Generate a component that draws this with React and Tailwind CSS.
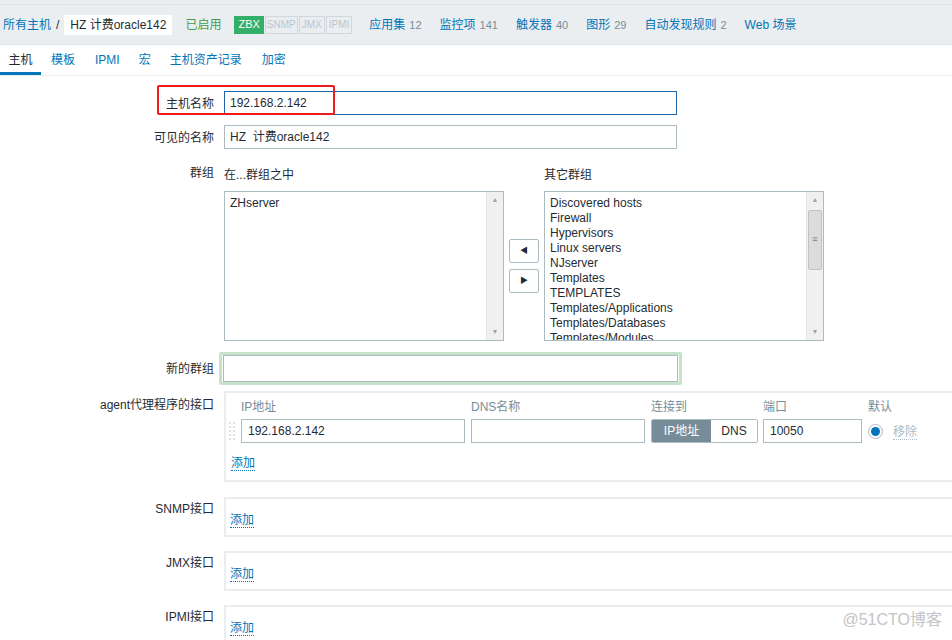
import React from 'react';

const FONT = { fontFamily: '"Liberation Sans", Arial, "Noto Sans CJK SC", sans-serif' };

const otherGroups = [
  'Discovered hosts',
  'Firewall',
  'Hypervisors',
  'Linux servers',
  'NJserver',
  'Templates',
  'TEMPLATES',
  'Templates/Applications',
  'Templates/Databases',
  'Templates/Modules',
];

function NavLink({ label, count }) {
  return (
    <span className="text-[#0275b8]">
      {label}
      {count !== undefined && <span className="ml-1 text-[11px] text-[#768d99]">{count}</span>}
    </span>
  );
}

function AddLink() {
  return (
    <span className="text-[12px] text-[#0275b8] border-b border-dotted border-[#0275b8] leading-[14px]">添加</span>
  );
}

function Scrollbar({ thumb }) {
  return (
    <div className="w-[17px] h-full bg-[#f0f0f0] flex flex-col items-center border-l border-[#e6e6e6]">
      <div className="h-[16px] flex items-center justify-center text-[7px] text-[#a3a3a3]">▲</div>
      <div className="flex-1 w-full px-[1px]">
        {thumb && (
          <div className="mt-[2px] h-[60px] w-full bg-[#dcdcdc] border border-[#c2c2c2] rounded-[2px] flex items-center justify-center text-[9px] text-[#7a7a7a]">≡</div>
        )}
      </div>
      <div className="h-[16px] flex items-center justify-center text-[7px] text-[#a3a3a3]">▼</div>
    </div>
  );
}

function Row({ label, children, labelClass = '' }) {
  return (
    <div className="flex">
      <div className={`w-[214px] shrink-0 text-right text-[12px] text-[#1f2c33] ${labelClass}`}>{label}</div>
      <div className="ml-[10px] flex-1">{children}</div>
    </div>
  );
}

function EmptyInterface({ label, top }) {
  return (
    <div className={`flex ${top}`}>
      <div className="w-[214px] shrink-0 text-right text-[12px] text-[#1f2c33] pt-[3px]">{label}</div>
      <div className="ml-[10px] flex-1 h-[40px] border-2 border-r-0 border-[#ebeef1] pl-[4px] pt-[12px]">
        <AddLink />
      </div>
    </div>
  );
}

export default function App() {
  return (
    <div className="relative w-[952px] h-[640px] overflow-hidden bg-white text-[12px] text-[#1f2c33]" style={FONT}>
      {/* header band */}
      <div className="h-[5px] bg-[#ebeef1] border-b border-[#dfe4e7]"></div>
      <div className="h-[40px] bg-[#ebeef1] border-b border-[#dfe4e7] flex items-center pl-[3px] text-[12px]">
        <span className="text-[#0275b8]">所有主机</span>
        <span className="mx-[5px] text-[#1f2c33]">/</span>
        <span className="bg-white h-[20px] px-[6px] flex items-center text-[#1f2c33]">HZ 计费oracle142</span>
        <span className="ml-[13px] text-[#429e47]">已启用</span>
        <div className="ml-[13px] flex items-center h-[18px] text-[10px]">
          <span className="h-full px-[3px] flex items-center bg-[#34af67] text-white border border-[#34af67] text-[11px]">ZBX</span>
          <span className="h-full px-[1px] flex items-center bg-[#ebeef1] text-[#bcc5ca] border border-[#d1d7db] ml-[1px]">SNMP</span>
          <span className="h-full px-[2px] flex items-center bg-[#ebeef1] text-[#bcc5ca] border border-[#d1d7db] ml-[1px]">JMX</span>
          <span className="h-full px-[2px] flex items-center bg-[#ebeef1] text-[#bcc5ca] border border-[#d1d7db] ml-[1px]">IPMI</span>
        </div>
        <div className="ml-[17px] flex gap-[18px]">
          <NavLink label="应用集" count="12" />
          <NavLink label="监控项" count="141" />
          <NavLink label="触发器" count="40" />
          <NavLink label="图形" count="29" />
          <NavLink label="自动发现规则" count="2" />
          <NavLink label="Web 场景" />
        </div>
      </div>

      {/* tabs */}
      <div className="h-[31px] border-b border-[#ebeef1] flex items-stretch text-[12px]">
        <div className="w-[41px] flex items-center justify-center border-b-[3px] border-[#0275b8] pt-[3px] text-[#1f2c33]">主机</div>
        <div className="ml-[10px] flex items-center pb-[1px] text-[#0275b8]">模板</div>
        <div className="ml-[20px] flex items-center pb-[1px] text-[#0275b8]">IPMI</div>
        <div className="ml-[19px] flex items-center pb-[1px] text-[#0275b8]">宏</div>
        <div className="ml-[19px] flex items-center pb-[1px] text-[#0275b8]">主机资产记录</div>
        <div className="ml-[20px] flex items-center pb-[1px] text-[#0275b8]">加密</div>
      </div>

      {/* form */}
      <div className="pt-[15px]">
        <Row label="主机名称" labelClass="pt-[4px]">
          <div className="w-[453px] h-[24px] border border-[#1f65a6] px-[5px] flex items-center text-[#1f2c33]">192.168.2.142</div>
        </Row>
        <div className="mt-[10px]">
          <Row label="可见的名称" labelClass="pt-[4px]">
            <div className="w-[453px] h-[24px] border border-[#acbbc2] px-[5px] flex items-center">HZ&nbsp;&nbsp;计费oracle142</div>
          </Row>
        </div>
        <div className="mt-[15px]">
          <Row label="群组">
            <div className="flex">
              <div className="w-[280px]">
                <div className="h-[25px] pt-[2px]">在...群组之中</div>
                <div className="mt-[2px] h-[150px] border border-[#acbbc2] flex">
                  <div className="flex-1 pl-[5px] pt-[4px] leading-[15px]">ZHserver</div>
                  <Scrollbar />
                </div>
              </div>
              <div className="w-[40px] flex flex-col items-center pt-[75px] gap-[6px]">
                <div className="w-[30px] h-[24px] border border-[#acbbc2] rounded-[2px] flex items-center justify-center text-[8px] text-[#1f2c33]">◀</div>
                <div className="w-[30px] h-[24px] border border-[#acbbc2] rounded-[2px] flex items-center justify-center text-[8px] text-[#1f2c33]">▶</div>
              </div>
              <div className="w-[280px]">
                <div className="h-[25px] pt-[2px]">其它群组</div>
                <div className="mt-[2px] h-[150px] border border-[#acbbc2] flex overflow-hidden">
                  <div className="flex-1 pl-[5px] pt-[4px] leading-[15px] text-[#1f2c33] overflow-hidden">
                    {otherGroups.map((g) => (
                      <div key={g}>{g}</div>
                    ))}
                  </div>
                  <Scrollbar thumb />
                </div>
              </div>
            </div>
          </Row>
        </div>

        <div className="mt-[11px]">
          <Row label="新的群组" labelClass="pt-[8px]">
            <div className="w-[463px] -ml-[5px] h-[33px] border-[3px] border-[#c5e3c8] rounded-[2px]">
              <div className="h-full mx-[1px] border border-[#acbbc2] bg-white"></div>
            </div>
          </Row>
        </div>

        {/* agent interface */}
        <div className="flex mt-[6px]">
          <div className="w-[214px] shrink-0 text-right pt-[5px]">agent代理程序的接口</div>
          <div className="ml-[10px] flex-1 h-[91px] border-2 border-r-0 border-[#ebeef1] pl-[3px]">
            <div className="flex text-[#768d99] pt-[5px] h-[26px]">
              <div className="w-[242px] pl-[12px]">IP地址</div>
              <div className="w-[180px]">DNS名称</div>
              <div className="w-[112px]">连接到</div>
              <div className="w-[105px]">端口</div>
              <div>默认</div>
            </div>
            <div className="flex items-center h-[24px]">
              <div className="w-[8px] h-[20px] flex flex-col justify-between py-[1px] mr-[4px]">
                {[0, 1, 2, 3, 4].map((i) => (
                  <div key={i} className="flex gap-[2px]">
                    <span className="w-[2px] h-[2px] bg-[#dfe4e7]"></span>
                    <span className="w-[2px] h-[2px] bg-[#dfe4e7]"></span>
                  </div>
                ))}
              </div>
              <div className="w-[224px] h-[24px] border border-[#acbbc2] px-[6px] flex items-center">192.168.2.142</div>
              <div className="ml-[6px] w-[174px] h-[24px] border border-[#acbbc2]"></div>
              <div className="ml-[6px] flex h-[24px] border border-[#acbbc2] rounded-[2px] overflow-hidden">
                <div className="w-[59px] bg-[#768d99] text-white flex items-center justify-center">IP地址</div>
                <div className="w-[46px] flex items-center justify-center text-[#1f2c33]">DNS</div>
              </div>
              <div className="ml-[5px] w-[99px] h-[24px] border border-[#acbbc2] px-[6px] flex items-center">10050</div>
              <div className="ml-[6px] w-[15px] h-[15px] rounded-full border border-[#acbbc2] flex items-center justify-center">
                <div className="w-[9px] h-[9px] rounded-full bg-[#0275b8]"></div>
              </div>
              <span className="ml-[10px] text-[#acbbc2] border-b border-dotted border-[#acbbc2] leading-[14px] mt-[3px]">移除</span>
            </div>
            <div className="pl-[2px] pt-[11px]">
              <AddLink />
            </div>
          </div>
        </div>

        <EmptyInterface label="SNMP接口" top="mt-[15px]" />
        <EmptyInterface label="JMX接口" top="mt-[14px]" />
        <EmptyInterface label="IPMI接口" top="mt-[14px]" />
      </div>

      {/* annotation box */}
      <div className="absolute left-[157px] top-[85px] w-[178px] h-[30px] border-2 border-[#f01a1a] rounded-[2px] pointer-events-none"></div>

      {/* watermark */}
      <div className="absolute right-[10px] bottom-[8px] text-[16px] text-[#c4c4c4]">@51CTO博客</div>
    </div>
  );
}
